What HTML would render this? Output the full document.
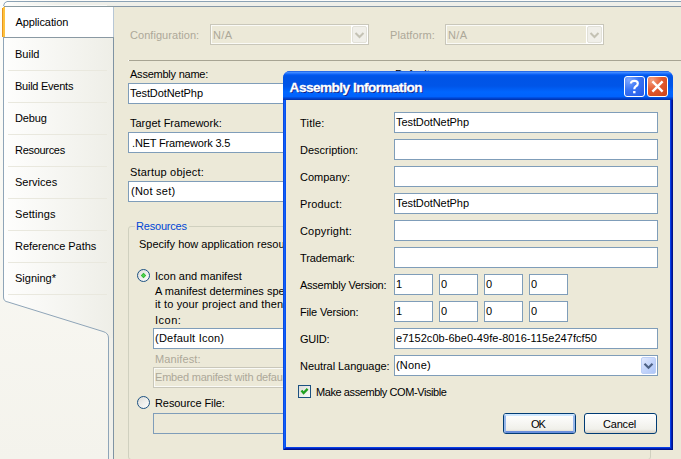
<!DOCTYPE html>
<html><head><meta charset="utf-8">
<style>
*{margin:0;padding:0;box-sizing:border-box}
html,body{width:681px;height:459px;overflow:hidden;background:#F6F5EF;position:relative;font-family:"Liberation Sans",sans-serif;font-size:11px;color:#000}
.a{position:absolute}
.t{position:absolute;white-space:nowrap;line-height:13px;-webkit-text-stroke-width:0px}
.dis{color:#ACA899}
.tb{position:absolute;background:#fff;border:1px solid #7F9DB9}
.cbd{position:absolute;background:#ECE9D8;border:1px solid #C9C7BA;box-shadow:inset 1px 1px 0 #FAFAF6,inset -1px -1px 0 #FAFAF6}
</style></head><body>

<!-- top strip -->
<div class="a" style="left:0;top:0;width:681px;height:7px;background:#FCFCFA"></div>
<div class="a" style="left:7px;top:1px;width:674px;height:1px;background:#8BA2B5"></div>
<div class="a" style="left:4px;top:2px;width:677px;height:4px;background:linear-gradient(to right,#FFFFFF 0px,#FAFAF7 12px,#EFEFE9 60px)"></div>
<div class="a" style="left:5px;top:5px;width:102px;height:1px;background:#FBFBF9"></div>
<div class="a" style="left:4px;top:6px;width:110px;height:1px;background:#8A9AA0"></div>
<div class="a" style="left:114px;top:6px;width:567px;height:1px;background:#8597A6"></div>

<!-- left tab strip -->
<svg class="a" style="left:0;top:0" width="114" height="459">
  <defs>
    <linearGradient id="tg" x1="0" x2="1" y1="0" y2="0">
      <stop offset="0" stop-color="#FEFEFD"/>
      <stop offset="1" stop-color="#EEEEE7"/>
    </linearGradient>
    <linearGradient id="bg" x1="0" x2="0" y1="0" y2="459" gradientUnits="userSpaceOnUse"><stop offset="0" stop-color="#FDFDFA"/><stop offset="1" stop-color="#F4F3EC"/></linearGradient>
  </defs>
  <rect x="4" y="7" width="109" height="452" fill="url(#tg)"/>
  <path d="M3.5 7 V297 Q3.5 301.5 8 302 L103 331.5 Q108.5 333 108.5 338 V459 H0 V7 Z" fill="url(#bg)"/>
  <path d="M3.5 7 V297 Q3.5 301.5 8 302 L103 331.5 Q108.5 333 108.5 338 V459" fill="none" stroke="#8FA5B8" stroke-width="1"/>
  <path d="M7 1.5 Q4 2 3.5 6" fill="none" stroke="#8FA5B8" stroke-width="1"/>
  <rect x="109" y="338" width="4" height="121" fill="#F0F0EA"/>
  <rect x="113" y="7" width="1" height="452" fill="#7F93A3"/>
  <!-- selected tab -->
  <rect x="4" y="7" width="109" height="30" fill="#FFFFFF"/>
  <rect x="113" y="7" width="1" height="30" fill="#B7C7D6"/>
  <rect x="4" y="37" width="110" height="1" fill="#8A99A3"/>
  <rect x="2" y="8" width="1" height="29" fill="#E8951E"/>
  <rect x="3" y="7" width="2" height="30" fill="#FDC23F"/>
  <!-- separators -->
  <g fill="#E9E8DE">
    <rect x="8" y="70" width="99" height="1"/>
    <rect x="8" y="102" width="99" height="1"/>
    <rect x="8" y="134" width="99" height="1"/>
    <rect x="8" y="166" width="99" height="1"/>
    <rect x="8" y="198" width="99" height="1"/>
    <rect x="8" y="230" width="99" height="1"/>
    <rect x="8" y="262" width="99" height="1"/>
    <rect x="8" y="294" width="99" height="1"/>
  </g>
</svg>
<div class="t" style="left:15.5px;top:16px;letter-spacing:-0.1px">Application</div>
<div class="t" style="left:15px;top:48px">Build</div>
<div class="t" style="left:15px;top:80px;letter-spacing:-0.25px">Build Events</div>
<div class="t" style="left:15px;top:112px;letter-spacing:-0.15px">Debug</div>
<div class="t" style="left:15px;top:144px;letter-spacing:-0.3px">Resources</div>
<div class="t" style="left:15px;top:176px">Services</div>
<div class="t" style="left:15px;top:208px;letter-spacing:0.1px">Settings</div>
<div class="t" style="left:15px;top:240px;letter-spacing:-0.05px">Reference Paths</div>
<div class="t" style="left:15px;top:272px">Signing*</div>

<!-- content area -->
<div class="a" style="left:114px;top:7px;width:567px;height:452px;background:#ECE9D8"></div>

<div class="t dis" style="left:130px;top:29px;letter-spacing:0.05px">Configuration:</div>
<div class="cbd" style="left:210px;top:24px;width:159px;height:21px"></div>
<div class="a" style="left:351px;top:25px;width:17px;height:19px;background:#fff"></div>
<div class="a" style="left:352px;top:26px;width:15px;height:17px;border-radius:2px;background:#F0EFE9;border:1px solid #E2E1D8"></div>
<svg class="a" style="left:352px;top:26px" width="15" height="17"><path d="M3.5 7 L7.5 11 L11.5 7" fill="none" stroke="#C4C2B4" stroke-width="2"/></svg>
<div class="t dis" style="left:213px;top:29px;letter-spacing:0.4px">N/A</div>
<div class="t dis" style="left:390px;top:29px;letter-spacing:0.1px">Platform:</div>
<div class="cbd" style="left:445px;top:24px;width:159px;height:21px"></div>
<div class="a" style="left:586px;top:25px;width:17px;height:19px;background:#fff"></div>
<div class="a" style="left:587px;top:26px;width:15px;height:17px;border-radius:2px;background:#F0EFE9;border:1px solid #E2E1D8"></div>
<svg class="a" style="left:587px;top:26px" width="15" height="17"><path d="M3.5 7 L7.5 11 L11.5 7" fill="none" stroke="#C4C2B4" stroke-width="2"/></svg>
<div class="t dis" style="left:448px;top:29px;letter-spacing:0.4px">N/A</div>
<div class="a" style="left:129px;top:60px;width:552px;height:1px;background:#A7A493"></div>
<div class="a" style="left:128px;top:60px;width:1px;height:1px;background:#FFFFFF"></div>

<div class="t" style="left:130px;top:68px;letter-spacing:-0.23px">Assembly name:</div>
<div class="tb" style="left:128px;top:83px;width:300px;height:21px"></div>
<div class="t" style="left:130px;top:87px;letter-spacing:-0.08px">TestDotNetPhp</div>
<div class="t" style="left:395px;top:68px">Default namespace:</div>

<div class="t" style="left:130px;top:117px">Target Framework:</div>
<div class="tb" style="left:128px;top:132px;width:300px;height:21px"></div>
<div class="t" style="left:132px;top:137px;letter-spacing:-0.17px">.NET Framework 3.5</div>

<div class="t" style="left:130px;top:166px;letter-spacing:0.2px">Startup object:</div>
<div class="tb" style="left:128px;top:181px;width:300px;height:21px"></div>
<div class="t" style="left:131px;top:185px;letter-spacing:0.25px">(Not set)</div>

<!-- group -->
<div class="a" style="left:128px;top:226px;width:523px;height:234px;border:1px solid #D0D0BF;border-radius:3px"></div>
<div class="a" style="left:135px;top:220px;width:54px;height:13px;background:#ECE9D8"></div>
<div class="t" style="left:136px;top:220px;color:#0046D5;letter-spacing:-0.2px">Resources</div>
<div class="t" style="left:139px;top:238px">Specify how application resources will be managed:</div>

<div class="t" style="left:155px;top:270px">Icon and manifest</div>
<div class="t" style="left:155px;top:285px">A manifest determines specific settings for an application. To embed a custom manifest, first add</div>
<div class="t" style="left:155px;top:298px;letter-spacing:0.15px">it to your project and then select it from the list below.</div>
<div class="t" style="left:155px;top:314px;letter-spacing:0.5px">Icon:</div>
<div class="tb" style="left:153px;top:328px;width:300px;height:21px"></div>
<div class="t" style="left:155px;top:332px;letter-spacing:0.23px">(Default Icon)</div>
<div class="t dis" style="left:155px;top:353px;letter-spacing:0.12px">Manifest:</div>
<div class="cbd" style="left:153px;top:367px;width:300px;height:21px"></div>
<div class="t dis" style="left:155px;top:371px;letter-spacing:-0.2px">Embed manifest with default settings</div>
<div class="t" style="left:155px;top:397px;letter-spacing:-0.08px">Resource File:</div>
<div class="a" style="left:153px;top:413px;width:300px;height:21px;border:1px solid #7F9DB9;background:#ECE9D8"></div>

<svg class="a" style="left:137px;top:269px" width="13" height="13">
  <defs><linearGradient id="rg" x1="0" y1="0" x2="1" y2="1"><stop offset="0" stop-color="#DCDCD7"/><stop offset="1" stop-color="#FFFFFF"/></linearGradient></defs>
  <circle cx="6.5" cy="6.5" r="6" fill="url(#rg)" stroke="#1C5180" stroke-width="1"/>
  <path d="M6.5 3.8 L9.2 6.5 L6.5 9.2 L3.8 6.5 Z" fill="#2BB52B"/>
  <circle cx="6.5" cy="6.5" r="1.3" fill="#55D555"/>
</svg>
<svg class="a" style="left:137px;top:396px" width="13" height="13">
  <circle cx="6.5" cy="6.5" r="6" fill="url(#rg)" stroke="#1C5180" stroke-width="1"/>
</svg>

<!-- dialog frame -->
<div class="a" style="left:283px;top:71px;width:390px;height:379px;background:#0840E8;border-radius:7px 7px 0 0"></div>
<div class="a" style="left:283px;top:100px;width:1px;height:350px;background:#0A48E0"></div>
<div class="a" style="left:284px;top:100px;width:1px;height:348px;background:#1060F8"></div>
<div class="a" style="left:285px;top:100px;width:1px;height:347px;background:#0850F0"></div>
<div class="a" style="left:672px;top:100px;width:1px;height:350px;background:#00138C"></div>
<div class="a" style="left:671px;top:100px;width:1px;height:349px;background:#0020B8"></div>
<div class="a" style="left:670px;top:100px;width:1px;height:348px;background:#0840E6"></div>
<div class="a" style="left:284px;top:449px;width:389px;height:1px;background:#00138C"></div>
<div class="a" style="left:285px;top:448px;width:387px;height:1px;background:#0020B8"></div>
<div class="a" style="left:286px;top:447px;width:385px;height:1px;background:#0840E6"></div>
<div class="a" style="left:283px;top:71px;width:390px;height:29px;border-radius:7px 7px 0 0;background:linear-gradient(#1A5ADF 0px,#3D8BFF 1.5px,#2474FF 2.5px,#0058EE 4px,#0054E6 6px,#0055E8 15px,#0066FF 21px,#0062FC 25.5px,#0048D8 27px,#0036B4 28.5px,#0030A0 29px)"></div>
<div class="a" style="left:286px;top:100px;width:384px;height:347px;background:#ECE9D8"></div>
<div class="a" style="left:289.6px;top:79px;color:#fff;font-weight:bold;font-size:13.6px;line-height:17px;white-space:nowrap;text-shadow:1px 1px 0 #0A1A80;letter-spacing:-0.52px;-webkit-text-stroke:0.3px #fff">Assembly Information</div>

<!-- caption buttons -->
<div class="a" style="left:624px;top:76px;width:21px;height:21px;border:1px solid #fff;border-radius:3px;background:radial-gradient(circle at 20% 15%,#7EA8FF 0%,#3A74F4 45%,#2258E6 100%)"></div>
<div class="a" style="left:647px;top:76px;width:21px;height:21px;border:1px solid #fff;border-radius:3px;background:radial-gradient(circle at 20% 15%,#F4A080 0%,#E45A30 45%,#CC4216 100%)"></div>
<svg class="a" style="left:624px;top:76px" width="44" height="21">
  <path d="M6.9 7.4 Q6.9 4.9 10.3 4.9 Q13.8 4.9 13.8 7.4 Q13.8 9.1 11.9 10.2 Q10.3 11.2 10.3 13.2" fill="none" stroke="#fff" stroke-width="2.2"/>
  <rect x="9.1" y="15" width="2.4" height="2.3" fill="#fff"/>
  <path d="M28.4 5.4 L38.6 15.6 M38.6 5.4 L28.4 15.6" stroke="#fff" stroke-width="2.4"/>
</svg>

<!-- dialog content -->
<div class="t" style="left:300px;top:117px;letter-spacing:0.2px">Title:</div>
<div class="t" style="left:300px;top:144px">Description:</div>
<div class="t" style="left:300px;top:171px">Company:</div>
<div class="t" style="left:300px;top:198px;letter-spacing:0.14px">Product:</div>
<div class="t" style="left:300px;top:225px;letter-spacing:0.18px">Copyright:</div>
<div class="t" style="left:300px;top:252px;letter-spacing:-0.1px">Trademark:</div>
<div class="t" style="left:300px;top:279px;letter-spacing:-0.25px">Assembly Version:</div>
<div class="t" style="left:300px;top:306px;letter-spacing:-0.17px">File Version:</div>
<div class="t" style="left:300px;top:333px;letter-spacing:-0.25px">GUID:</div>
<div class="t" style="left:300px;top:360px;letter-spacing:-0.06px">Neutral Language:</div>

<div class="tb" style="left:394px;top:112px;width:264px;height:21px"></div>
<div class="tb" style="left:394px;top:139px;width:264px;height:21px"></div>
<div class="tb" style="left:394px;top:166px;width:264px;height:21px"></div>
<div class="tb" style="left:394px;top:193px;width:264px;height:21px"></div>
<div class="tb" style="left:394px;top:220px;width:264px;height:21px"></div>
<div class="tb" style="left:394px;top:247px;width:264px;height:21px"></div>
<div class="t" style="left:396px;top:116px;letter-spacing:-0.08px">TestDotNetPhp</div>
<div class="t" style="left:396px;top:197px;letter-spacing:-0.08px">TestDotNetPhp</div>

<div class="tb" style="left:394px;top:274px;width:39px;height:21px"></div>
<div class="tb" style="left:439px;top:274px;width:39px;height:21px"></div>
<div class="tb" style="left:484px;top:274px;width:39px;height:21px"></div>
<div class="tb" style="left:529px;top:274px;width:39px;height:21px"></div>
<div class="tb" style="left:394px;top:301px;width:39px;height:21px"></div>
<div class="tb" style="left:439px;top:301px;width:39px;height:21px"></div>
<div class="tb" style="left:484px;top:301px;width:39px;height:21px"></div>
<div class="tb" style="left:529px;top:301px;width:39px;height:21px"></div>
<div class="t" style="left:396px;top:278px">1</div>
<div class="t" style="left:441px;top:278px">0</div>
<div class="t" style="left:486px;top:278px">0</div>
<div class="t" style="left:531px;top:278px">0</div>
<div class="t" style="left:396px;top:305px">1</div>
<div class="t" style="left:441px;top:305px">0</div>
<div class="t" style="left:486px;top:305px">0</div>
<div class="t" style="left:531px;top:305px">0</div>

<div class="tb" style="left:394px;top:328px;width:264px;height:21px"></div>
<div class="t" style="left:396px;top:332px;letter-spacing:0.05px">e7152c0b-6be0-49fe-8016-115e247fcf50</div>

<div class="tb" style="left:394px;top:355px;width:264px;height:21px"></div>
<div class="t" style="left:396px;top:359px;letter-spacing:0.2px">(None)</div>
<div class="a" style="left:641px;top:357px;width:15px;height:17px;border-radius:2px;background:linear-gradient(135deg,#E2EAFE,#C4D5FB 50%,#AFC6F7);border:1px solid #BCCFF6"></div>
<svg class="a" style="left:641px;top:357px" width="15" height="17"><path d="M3.5 6.8 L7.5 10.8 L11.5 6.8" fill="none" stroke="#4D6185" stroke-width="2.2"/></svg>

<div class="a" style="left:298px;top:385px;width:13px;height:13px;border:1px solid #1C5180;background:linear-gradient(135deg,#DCDCD7,#FBFBF9)"></div>
<svg class="a" style="left:298px;top:385px" width="13" height="13"><path d="M3.5 5.5 L5.6 8.1 L9.6 3.9" fill="none" stroke="#21A121" stroke-width="2.3" stroke-linejoin="miter"/></svg>
<div class="t" style="left:316px;top:386px;letter-spacing:-0.42px">Make assembly COM-Visible</div>

<div class="a" style="left:503px;top:413px;width:73px;height:21px;border:1px solid #003C74;border-radius:3px;background:linear-gradient(#FFFFFF,#F0F0EA 80%,#D6D0C5)"></div>
<div class="a" style="left:504px;top:414px;width:71px;height:19px;border-radius:2px;border:2px solid;border-color:#CEE7FF #98B8EA #6A8FDC #98B8EA"></div>
<div class="t" style="left:531px;top:418px;letter-spacing:-1px">OK</div>
<div class="a" style="left:584px;top:413px;width:73px;height:21px;border:1px solid #003C74;border-radius:3px;background:linear-gradient(#FFFFFF,#F0F0EA 80%,#D6D0C5)"></div>
<div class="t" style="left:603px;top:418px;letter-spacing:-0.2px">Cancel</div>
</body></html>
